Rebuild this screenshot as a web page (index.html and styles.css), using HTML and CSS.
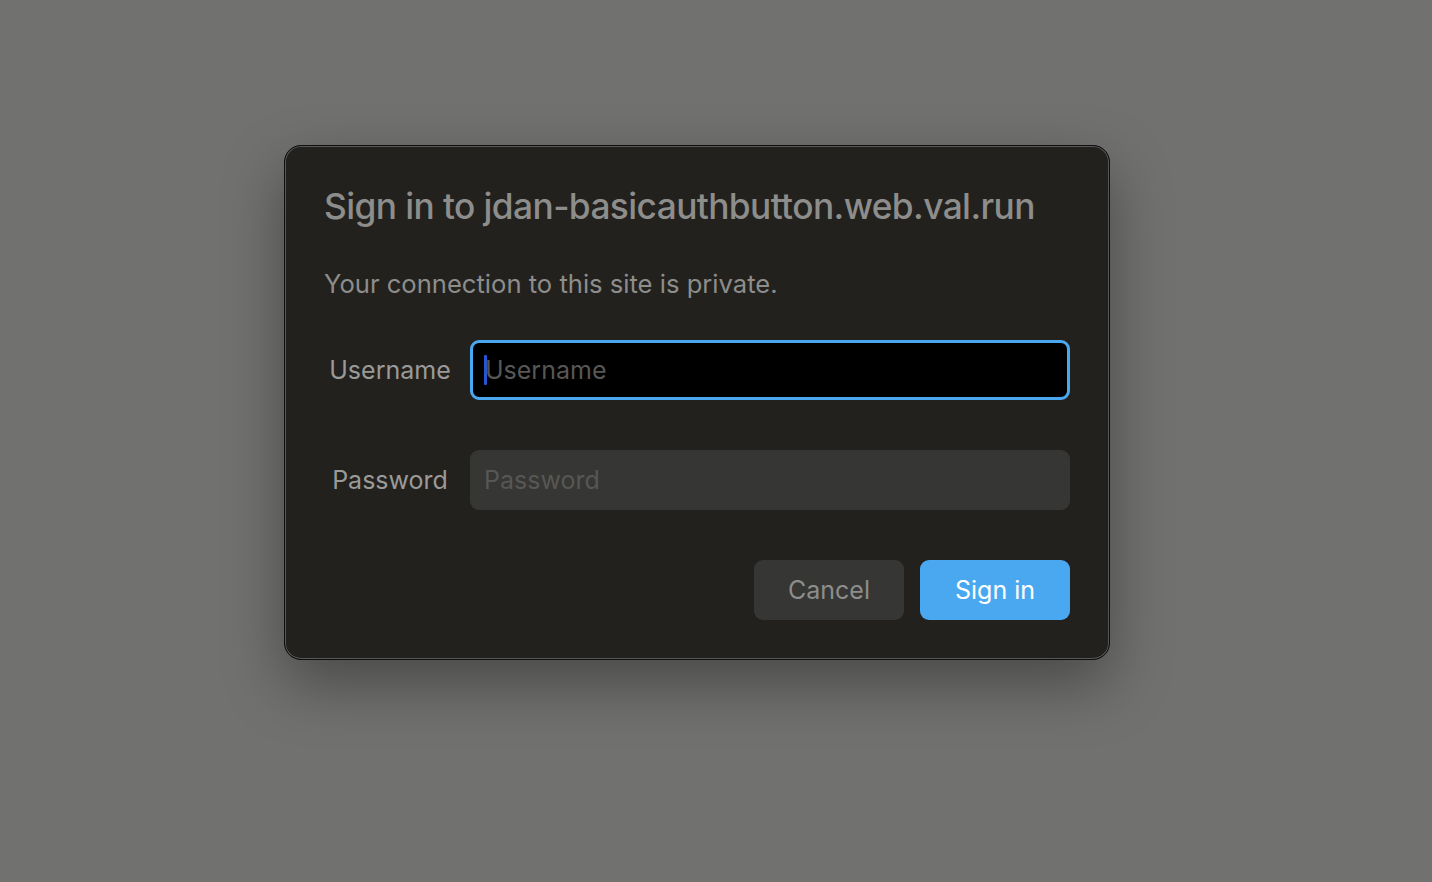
FILE: index.html
```html
<!DOCTYPE html>
<html lang="en">
<head>
    <meta charset="UTF-8">
    <meta name="viewport" content="width=device-width, initial-scale=1.0">
    <title>Sign in</title>
    <link rel="stylesheet" href="styles.css">
</head>
<body>
    <div class="dialog">
        <h1 class="dialog-title">Sign in to jdan-basicauthbutton.web.val.run</h1>
        <p class="dialog-note">Your connection to this site is private.</p>

        <div class="field-row">
            <span class="field-label">Username</span>
            <div class="field-input focused">
                <span class="caret"></span>
                <span class="placeholder">Username</span>
            </div>
        </div>

        <div class="field-row">
            <span class="field-label">Password</span>
            <div class="field-input">
                <span class="placeholder">Password</span>
            </div>
        </div>

        <div class="actions">
            <button class="btn btn-cancel">Cancel</button>
            <button class="btn btn-primary">Sign in</button>
        </div>
    </div>
</body>
</html>
```

FILE: styles.css
```css
:root {
    --page-bg: #717170;
    --dialog-bg: #22211e;
    --text-muted: #8d8d8b;
    --field-bg: #363634;
    --accent: #4aa8f0;
    --font-family: 'Inter', 'Noto Sans', sans-serif;
}

html, body {
    margin: 0;
    height: 100%;
}

body {
    font-family: var(--font-family);
    background: var(--page-bg);
    padding: 145px 0 0 284px;
    box-sizing: border-box;
}

.dialog {
    width: 826px;
    height: 515px;
    box-sizing: border-box;
    padding: 37px 39px 40px 39px;
    background: var(--dialog-bg);
    border: 1px solid #0e0e0d;
    border-radius: 17px;
    box-shadow: inset 0 0 0 1px #58585a, 0 24px 60px rgba(0, 0, 0, 0.35);
    display: flex;
    flex-direction: column;
}

.dialog-title {
    margin: 0;
    font-size: 35.3px;
    font-weight: 500;
    letter-spacing: -0.6px;
    line-height: 48px;
    color: var(--text-muted);
}

.dialog-note {
    margin: 31px 0 0;
    font-size: 25.6px;
    line-height: 44px;
    color: var(--text-muted);
}

.field-row {
    display: flex;
    align-items: center;
    margin-top: 34px;
}

.field-row + .field-row {
    margin-top: 50px;
}

.field-label {
    width: 132px;
    margin-right: 14px;
    text-align: center;
    font-size: 25px;
    color: #9a9a98;
}

.field-input {
    flex: 1;
    height: 60px;
    box-sizing: border-box;
    border-radius: 9px;
    background: var(--field-bg);
    display: flex;
    align-items: center;
    padding-left: 14px;
    font-size: 25px;
}

.field-input.focused {
    background: #000;
    border: 3px solid var(--accent);
    padding-left: 11px;
}

.placeholder {
    color: #575755;
}

.caret {
    width: 3px;
    height: 30px;
    background: #2656d6;
    border-radius: 1px;
    margin-right: -2px;
}

.actions {
    display: flex;
    justify-content: flex-end;
    gap: 16px;
    margin-top: 50px;
}

.btn {
    width: 150px;
    height: 60px;
    border: none;
    border-radius: 9px;
    font-family: var(--font-family);
    font-size: 25px;
    cursor: pointer;
}

.btn-cancel {
    background: var(--field-bg);
    color: var(--text-muted);
}

.btn-primary {
    background: var(--accent);
    color: #fff;
}
```
